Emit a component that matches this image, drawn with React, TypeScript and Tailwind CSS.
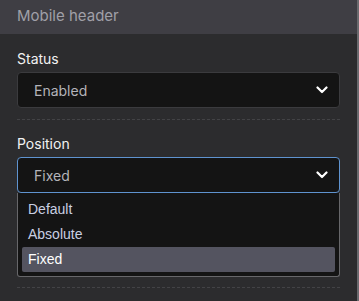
function Chevron() {
  return (
    <svg width="12" height="8" viewBox="0 0 12 8" fill="none">
      <path d="M1.5 1.5 L6 6 L10.5 1.5" stroke="#ffffff" strokeWidth="2.2" strokeLinecap="round" strokeLinejoin="round" />
    </svg>
  );
}

function Select({ value, active }: { value: string; active?: boolean }) {
  return (
    <div
      className={
        "flex h-[36px] items-center justify-between rounded-[4px] border bg-[#141414] pl-[16px] pr-[11px] " +
        (active ? "border-[#5f93cf]" : "border-[#3b3b3e]")
      }
    >
      <span className="text-[14px] text-[#b4b4ba]">{value}</span>
      <Chevron />
    </div>
  );
}

function Dashed() {
  return <div className="h-0 border-t border-dashed border-[#434346]" />;
}

export default function App() {
  const options = ["Default", "Absolute", "Fixed"];
  return (
    <div className="flex h-[301px] w-[359px] overflow-hidden bg-[#2c2c2e] font-['Inter',sans-serif]">
      <div className="flex w-[357px] flex-col">
        <div className="flex h-[34px] items-center bg-[#3f3e44] px-[17px] pb-[1px]">
          <span className="text-[15px] text-[#a0a0a8]">Mobile header</span>
        </div>
        <div className="flex flex-col px-[17px] pt-[15px]">
          <div className="text-[14px] leading-[20px] text-[#f2f2f2]">Status</div>
          <div className="mt-[3px]">
            <Select value="Enabled" />
          </div>
          <div className="mt-[11px]">
            <Dashed />
          </div>
          <div className="mt-[14px] text-[14px] leading-[20px] text-[#f2f2f2]">Position</div>
          <div className="mt-[3px]">
            <Select value="Fixed" active />
          </div>
          <div className="flex flex-col rounded-b-[3px] border border-t-0 border-[#67676a] bg-[#141414] px-[4px] pt-[4px] pb-[4px] font-['Liberation_Sans',Arial,sans-serif] text-[14px]">
            {options.map((o) => (
              <div
                key={o}
                className={
                  "flex h-[25px] items-center rounded-[2px] px-[6px] " +
                  (o === "Fixed" ? "bg-[#545460] text-white" : "text-[#c9cfe2]")
                }
              >
                {o}
              </div>
            ))}
          </div>
          <div className="mt-[10px]">
            <Dashed />
          </div>
        </div>
      </div>
      <div className="w-[2px] bg-[#6a6a6e]" />
    </div>
  );
}
